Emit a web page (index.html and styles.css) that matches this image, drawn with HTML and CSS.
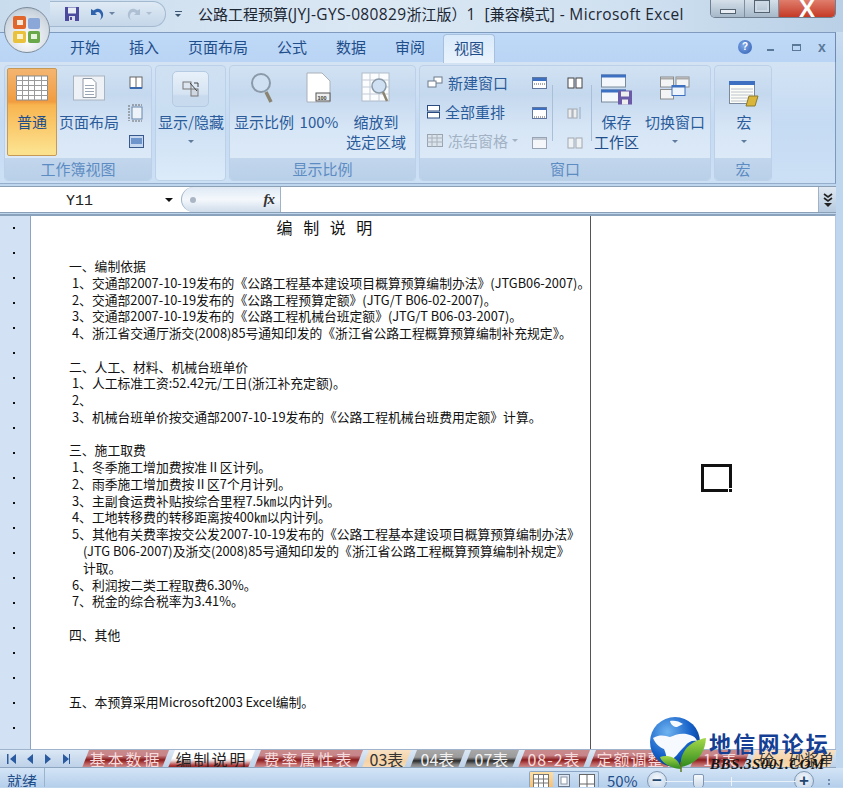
FILE: index.html
```html
<!DOCTYPE html>
<html lang="zh">
<head>
<meta charset="utf-8">
<title>Excel</title>
<link rel="stylesheet" href="styles.css">
</head>
<body>
<div class="window">
  <header class="titlebar">
    <div class="qat">
      <svg class="qat-save" width="16" height="16" viewBox="0 0 16 16"><rect x="1" y="1" width="14" height="14" fill="#4b4a9e"/><rect x="4" y="1.5" width="8" height="6" fill="#e8edf6"/><rect x="5" y="10" width="6" height="5" fill="#d8dce8"/><rect x="6" y="11" width="2" height="3" fill="#4b4a9e"/></svg>
      <svg class="qat-undo" width="16" height="14" viewBox="0 0 16 14"><path d="M2 2v6h6L6 6c3-2 5-1 6 2 .6 2 0 3-1 5 3-2 4-5 2.500-8C11.500 1 8 1 4.500 3.500z" fill="#2f62ad"/></svg>
      <span class="qat-arrow"></span>
      <svg class="qat-redo" width="16" height="14" viewBox="0 0 16 14"><path d="M14 2v6H8l2-2C7 4 5 5 4 8c-.6 2 0 3 1 5-3-2-4-5-2.500-8C4.500 1 8 1 11.500 3.500z" fill="#aebfd3"/></svg>
      <span class="qat-arrow dim"></span>
    </div>
    <span class="qat-more"></span>
    <div class="doc-title">公路工程预算<span class="lat">(JYJ-GYS-080829</span>浙江版）<span class="lat">1&nbsp; [</span>兼容模式<span class="lat">] - Microsoft Excel</span></div>
    <div class="winbtns">
      <div class="wb wb-min"><i></i></div>
      <div class="wb wb-max"><i></i></div>
      <div class="wb wb-close">X</div>
    </div>
  </header>

  <div class="office-btn">
    <svg width="30" height="30" viewBox="0 0 30 30"><rect x="1" y="1" width="13" height="13" rx="2" fill="#e0662b"/><rect x="16" y="3" width="12" height="11" rx="2" fill="#8aa7d8"/><rect x="1" y="16" width="13" height="12" rx="2" fill="#e9c13d"/><rect x="16" y="16" width="12" height="12" rx="2" fill="#6aa84a"/><rect x="5" y="5" width="6" height="5" fill="#f7e9d8"/><rect x="19" y="19" width="6" height="5" fill="#e8f3e0"/><rect x="5" y="19" width="6" height="5" fill="#fbf3d0"/></svg>
  </div>

  <nav class="tabs">
    <span class="tab">开始</span><span class="tab">插入</span><span class="tab">页面布局</span><span class="tab">公式</span><span class="tab">数据</span><span class="tab">审阅</span><span class="tab tab-on">视图</span>
    <div class="tab-tools">
      <span class="help">?</span><span class="tool-min"></span><span class="tool-max"></span><span class="tool-x">x</span>
    </div>
  </nav>

  <section class="ribbon">
    <div class="group g1">
      <div class="gbody">
        <div class="big active w50">
          <svg width="32" height="25" viewBox="0 0 32 25"><rect x=".5" y=".5" width="31" height="24" fill="#fff" stroke="#8a8a8a"/><path d="M0 5h32M0 10h32M0 15h32M0 20h32M6.500 0v25M12.500 0v25M18.500 0v25M25.500 0v25" stroke="#9a9a9a"/></svg>
          <span class="lbl">普通</span>
        </div>
        <div class="big w62">
          <svg width="32" height="25" viewBox="0 0 32 25"><rect x=".5" y=".5" width="31" height="24" fill="#eef2f6" stroke="#aab4c0"/><path d="M10 3h9l4 4v15H10z" fill="#fff" stroke="#8e98a4"/><path d="M12 10h9M12 13h9M12 16h9M12 19h9" stroke="#9aa6b4"/></svg>
          <span class="lbl">页面布局</span>
        </div>
        <div class="smallcol icons-only c1">
          <svg width="14" height="14" viewBox="0 0 14 14"><rect x="1" y="1" width="12" height="11" fill="#fff" stroke="#666"/><path d="M1 12h12" stroke="#3a6ab0" stroke-width="2"/><path d="M7 1v11" stroke="#666"/></svg>
          <svg width="16" height="18" viewBox="0 0 16 18"><rect x="4" y="3" width="10" height="12" fill="#eef3fa" stroke="#6a86a8"/><path d="M1 1v16M4 1h10M4 17h10" stroke="#666" stroke-dasharray="2 1"/></svg>
          <svg width="15" height="13" viewBox="0 0 15 13"><rect x=".5" y=".5" width="14" height="12" fill="#c5d8f0" stroke="#39598c"/><rect x="2" y="3" width="11" height="6" fill="#6d94cb"/></svg>
        </div>
      </div>
      <div class="glabel">工作簿视图</div>
    </div>

    <div class="group g2">
      <div class="gbody">
        <div class="big">
          <div class="roundbox">
            <svg width="18" height="18" viewBox="0 0 18 18"><rect x="1" y="2" width="8" height="7" fill="#dde6f0" stroke="#777"/><rect x="9" y="9" width="7" height="7" fill="#cfd8e2" stroke="#777"/><path d="M8 3l7 8M12 3h4v4" stroke="#444" fill="none"/></svg>
          </div>
          <span class="lbl lbl-tight">显示/隐藏</span>
          <span class="drop"></span>
        </div>
      </div>
    </div>

    <div class="group g3">
      <div class="gbody">
        <div class="big w60">
          <svg width="28" height="32" viewBox="0 0 28 32"><circle cx="11" cy="11" r="9" fill="#cfe0f2" stroke="#8a9aa8" stroke-width="2"/><path d="M16 20l5 10" stroke="#8a8470" stroke-width="3.500"/></svg>
          <span class="lbl">显示比例</span>
        </div>
        <div class="big w44">
          <svg width="28" height="32" viewBox="0 0 28 32"><path d="M2 1h15l8 8v21H2z" fill="#fff" stroke="#aab0b8"/><rect x="11" y="21" width="14" height="8" fill="#eee" stroke="#555"/><text x="12.500" y="28" class="svgtiny">100</text></svg>
          <span class="lbl">100%</span>
        </div>
        <div class="big w62 zoom-sel">
          <svg width="30" height="32" viewBox="0 0 30 32"><rect x="1" y="1" width="27" height="28" fill="#fafcfe" stroke="#b0bcc8"/><path d="M1 8h27M1 15h27M1 22h27M9 1v28M18 1v28" stroke="#c4ccd8"/><circle cx="18" cy="14" r="7" fill="#cfe0f2" stroke="#8a9aa8" stroke-width="1.500"/><path d="M22 20l4 9" stroke="#8a8470" stroke-width="2.500"/></svg>
          <span class="lbl">缩放到<br>选定区域</span>
        </div>
      </div>
      <div class="glabel">显示比例</div>
    </div>

    <div class="group g4">
      <div class="gbody">
        <div class="smallcol c2">
          <div class="sitem"><svg width="16" height="14" viewBox="0 0 16 14"><rect x="7" y="1" width="8" height="6" fill="#fff" stroke="#6c7a8c"/><rect x="1" y="5" width="8" height="6" fill="#fff" stroke="#6c7a8c"/></svg>新建窗口</div>
          <div class="sitem"><svg width="13" height="14" viewBox="0 0 13 14"><rect x=".5" y=".5" width="12" height="5.500" fill="#fff" stroke="#2b4a80"/><rect x=".5" y="7.500" width="12" height="5.500" fill="#fff" stroke="#2b4a80"/></svg>全部重排</div>
          <div class="sitem off"><svg width="16" height="14" viewBox="0 0 16 14"><rect x=".5" y=".5" width="15" height="12" fill="#dbe3ec" stroke="#9aa4ae"/><path d="M0 4h16M0 8h16M5 0v13M10 0v13" stroke="#a8b2bc"/></svg>冻结窗格<span class="mini"></span></div>
        </div>
        <div class="smallcol icons-only c3">
          <svg width="15" height="12" viewBox="0 0 15 12"><rect x=".5" y=".5" width="14" height="11" fill="#fff" stroke="#6078a0"/><rect x="1" y="1" width="13" height="3" fill="#3d70c0"/><path d="M2 7h11" stroke="#555" stroke-dasharray="1 1"/></svg>
          <svg width="15" height="12" viewBox="0 0 15 12"><rect x=".5" y=".5" width="14" height="11" fill="#fff" stroke="#6078a0"/><rect x="1" y="1" width="13" height="2" fill="#3d70c0"/><path d="M2 10h11" stroke="#555" stroke-dasharray="1 1"/></svg>
          <svg width="15" height="12" viewBox="0 0 15 12"><rect x=".5" y=".5" width="14" height="11" fill="#f4f6f9" stroke="#98a4b4"/><rect x="1" y="1" width="13" height="2" fill="#c0c8d4"/></svg>
        </div>
        <i class="vsep"></i>
        <div class="smallcol icons-only c4">
          <svg width="16" height="12" viewBox="0 0 16 12"><rect x="1" y="1" width="6" height="10" fill="#fff" stroke="#444"/><rect x="9" y="1" width="6" height="10" fill="#fff" stroke="#444"/></svg>
          <svg width="16" height="14" viewBox="0 0 16 14"><rect x="1" y="3" width="4" height="9" fill="#eee" stroke="#a0a8b0"/><rect x="6" y="3" width="4" height="9" fill="#eee" stroke="#a0a8b0"/><path d="M13 1v12" stroke="#9ab"/></svg>
          <svg width="16" height="12" viewBox="0 0 16 12"><rect x="1" y="1" width="6" height="10" fill="#eef2f5" stroke="#a0a8b0"/><rect x="9" y="1" width="6" height="10" fill="#eef2f5" stroke="#a0a8b0"/></svg>
        </div>
        <i class="vsep"></i>
        <div class="big w56 save-ws">
          <svg width="32" height="31" viewBox="0 0 32 31"><rect x=".5" y=".5" width="24" height="12" fill="#f4f7fb" stroke="#7a8a9c"/><rect x="0" y="0" width="25" height="3" fill="#3d70c0"/><rect x=".5" y="15.500" width="24" height="12" fill="#f4f7fb" stroke="#7a8a9c"/><rect x="0" y="15" width="25" height="3" fill="#3d70c0"/><rect x="17" y="16" width="14" height="14" fill="#6a5aa8"/><rect x="20" y="17" width="8" height="5" fill="#eee"/><rect x="21" y="25" width="6" height="5" fill="#eee"/></svg>
          <span class="lbl">保存<br><span class="nudge">工作区</span></span>
        </div>
        <div class="big w62">
          <svg width="30" height="23" viewBox="0 0 30 23"><rect x=".5" y=".5" width="13" height="10" fill="#f2f4f6" stroke="#8c8c8c"/><rect x="1" y="1" width="12" height="2" fill="#aaa"/><rect x="16" y=".5" width="13" height="10" fill="#f2f4f6" stroke="#8c8c8c"/><rect x="16" y="1" width="13" height="2" fill="#aaa"/><rect x=".5" y="13" width="13" height="9.500" fill="#f2f4f6" stroke="#8c8c8c"/><rect x="12" y="9" width="13" height="10" fill="#eef4fc" stroke="#3d70c0"/><rect x="12" y="9" width="13" height="2" fill="#3d70c0"/></svg>
          <span class="lbl">切换窗口</span>
          <span class="drop"></span>
        </div>
      </div>
      <div class="glabel">窗口</div>
    </div>

    <div class="group g5">
      <div class="gbody">
        <div class="big macro">
          <svg width="30" height="26" viewBox="0 0 30 26"><rect x=".5" y=".5" width="25" height="22" fill="#fdfdf8" stroke="#7a8a9c"/><rect x="0" y="0" width="26" height="4" fill="#3d70c0"/><path d="M2 8h22M2 11h22M2 14h22M2 17h22M2 20h18" stroke="#bcc4cc"/><path d="M20 15h9l-3 10h-9z" fill="#d9b63a" stroke="#8a7a30"/></svg>
          <span class="lbl">宏</span>
          <span class="drop"></span>
        </div>
      </div>
      <div class="glabel">宏</div>
    </div>
  </section>

  <div class="formula">
    <div class="namebox">Y11<span class="nb-arrow"></span></div>
    <div class="fxpill"><i class="fxdot"></i><em class="fx">fx</em></div>
    <div class="finput"></div>
    <div class="fexpand">
      <svg width="12" height="14" viewBox="0 0 12 14"><path d="M2 1l4 3 4-3M2 5l4 3 4-3" fill="none" stroke="#222" stroke-width="1.600"/><path d="M2 10h8l-4 4z" fill="#222"/></svg>
    </div>
  </div>

  <main class="sheet">
    <aside class="rowhead">
      <i></i><i></i><i></i><i></i><i></i><i></i><i></i><i></i><i></i><i></i><i></i><i></i><i></i><i></i><i></i><i></i><i></i><i></i><i></i><i></i><i></i>
    </aside>
    <article class="page">
      <h1 class="ptitle">编 制 说 明</h1>
      <div class="body">
        <p class="h">一、编制依据</p>
        <p>1、交通部2007-10-19发布的《公路工程基本建设项目概算预算编制办法》(JTGB06-2007)。</p>
        <p>2、交通部2007-10-19发布的《公路工程预算定额》(JTG/T B06-02-2007)。</p>
        <p>3、交通部2007-10-19发布的《公路工程机械台班定额》(JTG/T B06-03-2007)。</p>
        <p>4、浙江省交通厅浙交(2008)85号通知印发的《浙江省公路工程概算预算编制补充规定》。</p>
        <p class="blank"></p>
        <p class="h">二、人工、材料、机械台班单价</p>
        <p>1、人工标准工资:52.42元/工日(浙江补充定额)。</p>
        <p>2、</p>
        <p>3、机械台班单价按交通部2007-10-19发布的《公路工程机械台班费用定额》计算。</p>
        <p class="blank"></p>
        <p class="h">三、施工取费</p>
        <p>1、冬季施工增加费按准Ⅱ区计列。</p>
        <p>2、雨季施工增加费按Ⅱ区7个月计列。</p>
        <p>3、主副食运费补贴按综合里程7.5㎞以内计列。</p>
        <p>4、工地转移费的转移距离按400㎞以内计列。</p>
        <p>5、其他有关费率按交公发2007-10-19发布的《公路工程基本建设项目概算预算编制办法》</p>
        <p class="cont">(JTG B06-2007)及浙交(2008)85号通知印发的《浙江省公路工程概算预算编制补规定》</p>
        <p class="cont">计取。</p>
        <p>6、利润按二类工程取费6.30%。</p>
        <p>7、税金的综合税率为3.41%。</p>
        <p class="blank"></p>
        <p class="h">四、其他</p>
        <p class="blank"></p>
        <p class="blank"></p>
        <p class="blank"></p>
        <p class="h">五、本预算采用Microsoft2003 Excel编制。</p>
      </div>
    </article>
    <div class="canvas">
      <div class="cellcursor"><i></i></div>
    </div>
  </main>

  <div class="sheettabs">
    <div class="nav">
      <svg width="70" height="12" viewBox="0 0 70 12"><path d="M7 1v10h1.500V1zM16 1l-6 5 6 5zM33 1l-6 5 6 5zM45 1l6 5-6 5zM63 1l6 5-6 5zM69 1v10h1.500V1z" fill="#2a5a9f"/></svg>
    </div>
    <div class="st red w86">基本数据</div>
    <div class="st on w86">编制说明</div>
    <div class="st red w110">费率属性表</div>
    <div class="st peach w50">03表</div>
    <div class="st dark w55">04表</div>
    <div class="st dark w55">07表</div>
    <div class="st red w72">08-2表</div>
    <div class="st red w100">定额调整表</div>
    <div class="st red w60">11表</div>
    <div class="st peach w86 narrow">砼、砂浆单价</div>
  </div>

  <footer class="status">
    <span class="ready">就绪</span>
    <div class="viewbtns">
      <span class="vb vb-on"><svg width="16" height="14" viewBox="0 0 16 14"><rect x=".5" y=".5" width="15" height="13" fill="#fff" stroke="#777"/><path d="M0 5h16M0 9h16M5.500 0v14M10.500 0v14" stroke="#777"/></svg></span>
      <span class="vb"><svg width="12" height="13" viewBox="0 0 12 13"><rect x=".5" y=".5" width="11" height="12" fill="#dfe8f2" stroke="#6a7a8c"/><rect x="3" y="3" width="6" height="7" fill="#fff" stroke="#8a96a4"/></svg></span>
      <span class="vb"><svg width="16" height="14" viewBox="0 0 16 14"><rect x=".5" y=".5" width="15" height="13" fill="#fff" stroke="#666"/><path d="M8 0v14M0 10h16" stroke="#666"/></svg></span>
    </div>
    <span class="pct">50%</span>
    <div class="zoomer">
      <span class="zbtn">−</span>
      <div class="ztrack"><i class="zmid"></i><i class="zthumb"></i></div>
      <span class="zbtn">+</span>
    </div>
    <span class="grip"></span>
  </footer>

  <div class="logo">
    <svg class="logo-art" width="62" height="56" viewBox="0 0 62 56">
      <defs><radialGradient id="g" cx=".35" cy=".3" r=".8"><stop offset="0" stop-color="#6fb4f0"/><stop offset=".6" stop-color="#1560c8"/><stop offset="1" stop-color="#06307c"/></radialGradient><linearGradient id="l" x1="0" y1="0" x2="0" y2="1"><stop offset="0" stop-color="#a5d94a"/><stop offset="1" stop-color="#2f8a1e"/></linearGradient></defs>
      <circle cx="25" cy="26" r="25" fill="url(#g)"/>
      <path d="M3 22c8-4 12-2 17-1 5-2 12-5 20-2 4 1 6 3 7 6-5-1-9 1-12 5-3 3-6 6-8 9-3 3-5 5-9 6-2-4-2-8-4-12-5-2-9-6-11-11zM20 5c4-1 9 0 13 3l-6 3c-3 0-6-2-7-6z" fill="#f6fafe"/>
      <path d="M31 51C29 38 38 25 56 22 55 38 46 48 31 51z" fill="url(#l)"/>
      <path d="M31 53C24 53 12 48 10 41c9-3 19 1 21 12z" fill="url(#l)"/>
      <path d="M31 56V46" stroke="#5a7a20" stroke-width="1.500"/>
    </svg>
    <div class="logo-cn">地信网论坛</div>
    <div class="logo-en">BBS.3S001.COM</div>
  </div>
</div>
</body>
</html>
```
FILE: styles.css
```css
* { box-sizing: border-box; }
html, body { margin: 0; padding: 0; }
body { width: 843px; height: 788px; overflow: hidden; font-family: "Noto Sans CJK SC", "Noto Sans", sans-serif; background: #cfe0f3; }
.window { position: relative; width: 843px; height: 788px; display: flex; flex-direction: column; overflow: hidden; background: linear-gradient(#d6e5f4, #bfd6ef 60px); }

/* title bar */
.titlebar { height: 32px; flex: none; display: flex; align-items: center; padding-left: 50px; background: linear-gradient(90deg, #c9dcee, #dbe8f4 45%, #cfe0f0 75%, #b9d0e6); position: relative; }
.qat { width: 116px; height: 26px; margin-top: -5px; border: 1px solid #a3b9d0; border-left: 0; border-radius: 0 14px 14px 0; display: flex; align-items: center; padding-left: 14px; background: linear-gradient(#dfeaf5, #c4d6e9); }
.qat-save { margin-right: 9px; }
.qat-arrow { width: 0; height: 0; border: 3px solid transparent; border-top-color: #6b84a4; margin: 3px 11px 0 4px; }
.qat-arrow.dim { border-top-color: #b0c0d2; }
.qat-more { width: 7px; height: 6px; margin: -4px 0 0 9px; border-top: 1px solid #3d5673; position: relative; }
.qat-more::after { content: ""; position: absolute; left: 0; top: 2px; border: 3.500px solid transparent; border-top-color: #3d5673; }
.doc-title { margin: -4px 0 0 16px; font-size: 15px; color: #1c2733; white-space: nowrap; font-family: "Noto Sans CJK SC", "Noto Sans", sans-serif; flex: 1; }
.lat { font-family: "Open Sans", sans-serif; font-size: 15.500px; letter-spacing: .35px; white-space: pre; }
.winbtns { position: absolute; right: 7px; top: 0; width: 126px; height: 18px; display: flex; border: 1px solid #6f7f90; border-top: 0; border-radius: 0 0 5px 5px; overflow: hidden; }
.wb { display: flex; align-items: center; justify-content: center; }
.wb-min, .wb-max { width: 34px; background: linear-gradient(#d4dfe9, #a6b8c9); border-right: 1px solid #7e8e9e; }
.wb-min i { display: block; width: 16px; height: 5px; margin-top: 5px; border: 1px solid #55626f; background: #e8eef4; }
.wb-max i { display: block; width: 16px; height: 13px; border: 1px solid #55626f; margin-top: -5px; box-shadow: inset 0 0 0 2px #cdd9e4; }
.wb-close { flex: 1; color: #fff; font-size: 24px; font-weight: 700; line-height: 16px; font-family: "Liberation Sans", sans-serif; background: linear-gradient(#e07d6c, #c43a26); }

.office-btn { position: absolute; left: 4px; top: 7px; width: 46px; height: 46px; border-radius: 50%; background: radial-gradient(circle at 50% 70%, #fff, #c9d3dd 75%, #8c9aa8); border: 1px solid #7d8c9c; display: flex; align-items: center; justify-content: center; z-index: 2; }

/* tabs */
.tabs { height: 30px; flex: none; margin-right: 7px; display: flex; align-items: flex-end; padding-left: 70px; border-top: 1px solid #7f9cbe; border-right: 1px solid #6f8cae; background: linear-gradient(#bfdaf8, #b9d4f4); font-size: 15px; color: #1f4e8a; position: relative; }
.tab { height: 28px; line-height: 26px; margin-right: 29px; white-space: nowrap; }
.tab-on { margin: 0 0 -1px -11px; height: 29px; padding: 0 10px; width: 52px; background: linear-gradient(#d9eafb, #eaf3fc); border: 1px solid #a7c0dc; border-bottom: 0; border-radius: 4px 4px 0 0; }
.tab-tools { position: absolute; left: 738px; top: 4px; width: 95px; height: 20px; display: flex; align-items: center; }
.help { width: 14px; height: 14px; border-radius: 50%; background: radial-gradient(circle at 40% 40%, #7fa8e6, #2d5cb2); color: #fff; font: 700 10px/14px "Liberation Sans", sans-serif; text-align: center; }
.tool-min { width: 7px; height: 2px; background: #5a7898; margin: 6px 0 0 15px; }
.tool-max { width: 9px; height: 7px; border: 1px solid #5a7898; border-top-width: 2px; margin-left: 18px; }
.tool-x { margin-left: 17px; font: 700 14px/14px "Liberation Sans", sans-serif; color: #5a7898; }

/* ribbon */
.ribbon { height: 122px; flex: none; margin-right: 7px; padding: 3px 0 1px 4px; display: flex; gap: 3px; background: linear-gradient(#d3e3f4, #c5dbf3 50%, #cce0f5); border-right: 1px solid #7c99ba; border-bottom: 1px solid #94aecb; }
.group { display: flex; flex-direction: column; height: 116px; border: 1px solid #bcd1e8; border-radius: 4px; overflow: hidden; background: linear-gradient(#d2e2f3, #c4d8ee 25%, #d7e6f6 55%, #dfebf8); color: #2a5b9a; }
.g1 { width: 148px; }
.g2 { width: 71px; background: linear-gradient(#cfe0f2, #cadef2 40%, #dcebfa); }
.g3 { width: 187px; }
.g4 { width: 292px; }
.g5 { width: 58px; }
.gbody { height: 92px; display: flex; padding: 2px; flex: none; }
.glabel { flex: 1; text-align: center; font-size: 15px; line-height: 22px; color: #5d8cc2; background: linear-gradient(#c2d6ec, #b9d0e9); }
.big { display: flex; flex-direction: column; align-items: center; flex: none; padding-top: 4px; font-size: 15px; }
.big svg { flex: none; height: 32px; }
.lbl { line-height: 20px; text-align: center; white-space: nowrap; margin-top: 8px; }
.lbl-tight { margin-top: 5px; }
.drop { width: 0; height: 0; margin-top: 8px; border: 3px solid transparent; border-top-color: #5e7a9c; }
.w50 { width: 50px; }
.w62 { width: 62px; }
.w60 { width: 60px; margin-left: 2px; }
.w44 { width: 44px; margin-left: 3px; }
.w56 { width: 55px; }
.active { border: 1px solid #c69a55; border-radius: 2px; padding-top: 3px; background: linear-gradient(#f4b571, #f19c3f 38%, #f8b550 42%, #fce18d 95%); color: #1e4d8b; }
.zoom-sel { margin-left: 4px; }
.g1 .w62 { margin-left: 1px; }
.smallcol { display: flex; flex-direction: column; }
.icons-only { align-items: center; justify-content: space-between; height: 81px; padding-top: 9px; }
.c1 { margin-left: 6px; width: 20px; height: 80px; padding-top: 8px; }
.c2 { width: 106px; padding: 0 0 0 5px; font-size: 15px; }
.sitem { height: 29px; display: flex; align-items: center; gap: 5px; white-space: nowrap; }
.sitem svg { flex: none; }
.sitem.off { color: #a2b2c4; }
.mini { width: 0; height: 0; margin: 3px 0 0 -1px; border: 3px solid transparent; border-top-color: #a2b2c4; }
.c3 { width: 22px; margin-left: 0; }
.c4 { width: 24px; margin-left: 10px; }
.vsep { display: block; width: 1px; height: 56px; margin: 17px 0 0 4px; background: #a9bfd8; }
.c3 + .vsep { margin-left: 2px; height: 56px; }
.save-ws { margin-left: -3px; padding-top: 6px; }
.save-ws .lbl { margin-top: 6px; }
.nudge { color: #1f4e8a; }
.macro { width: 54px; padding-top: 10px; }
.macro .lbl { margin-top: 2px; }
.svgtiny { font: 700 5.500px "Liberation Sans", sans-serif; fill: #333; }
.roundbox { width: 37px; height: 36px; margin-top: -1px; border: 1px solid #b4cbe3; border-radius: 5px; background: linear-gradient(#e8f1fa, #d5e3f2 65%, #c8daee 70%); display: flex; align-items: center; justify-content: center; }
.roundbox svg { height: 18px; }

/* formula bar */
.formula { height: 27px; flex: none; margin: 2px 7px 0 0; display: flex; align-items: stretch; background: #fff; border-top: 1px solid #8ba0b4; border-bottom: 1px solid #8ba0b4; }
.namebox { width: 181px; padding: 2px 0 0 66px; font: 15px/26px "Liberation Mono", monospace; color: #222; position: relative; }
.nb-arrow { position: absolute; left: 165px; top: 11px; border: 4.500px solid transparent; border-top-color: #111; }
.fxpill { width: 100px; position: relative; border: 1px solid #9fb2c6; border-right: 1px solid #9fb2c6; border-top: 0; border-bottom: 0; border-radius: 13px 0 0 13px; background: linear-gradient(#dfe9f4, #f4f8fc 50%, #cfdceb); }
.fxdot { position: absolute; left: 8px; top: 10px; width: 6px; height: 6px; border-radius: 50%; background: #aab6c4; }
.fx { position: absolute; right: 6px; top: 1px; font: italic 700 15px/22px "Liberation Serif", serif; color: #333; letter-spacing: -1px; }
.finput { flex: 1; }
.fexpand { width: 18px; display: flex; align-items: center; justify-content: center; background: linear-gradient(#dfe8f2, #b8cbe0); border-left: 1px solid #9fb2c6; }

/* sheet */
.sheet { height: 535px; flex: none; margin: 1px 7px 0 0; display: flex; background: #fff; border-top: 2px solid #8aa2bc; border-right: 1px solid #b6c8dc; }
.rowhead { width: 31px; flex: none; padding-top: 11px; background: #d2e2f4; border-right: 1px solid #8ba4c2; display: flex; flex-direction: column; align-items: center; gap: 23px; padding-right: 22px; padding-left: 0; }
.rowhead i { display: block; width: 2px; height: 2px; background: #111; flex: none; margin-left: 19px; }
.page { width: 560px; flex: none; border-right: 1px solid #555; overflow: hidden; }
.ptitle { margin: 0; height: 42px; font-weight: 400; font-size: 16px; line-height: 22px; text-align: center; word-spacing: 7px; padding-left: 28px; color: #111; }
.body { padding-left: 41px; font-size: 12.800px; line-height: 16.770px; color: #111; }
.body p { margin: 0; height: 16.770px; white-space: nowrap; }
.body p.h { margin-left: -3px; }
.body p.cont { padding-left: 11px; }
.canvas { flex: 1; display: flex; align-items: flex-start; }
.cellcursor { width: 31px; height: 28px; border: 3px solid #111; margin: 248px 0 0 110px; position: relative; }
.cellcursor i { position: absolute; right: -4px; bottom: -4px; width: 5px; height: 5px; background: #111; border: 1px solid #fff; }

/* sheet tabs */
.sheettabs { height: 19px; flex: none; display: flex; align-items: stretch; margin-right: 7px; background: linear-gradient(#dbe7f4, #bdd1e8); border-top: 1px solid #9fb4cc; border-bottom: 1px solid #8fa6c0; overflow: hidden; }
.nav { width: 82px; flex: none; display: flex; align-items: center; }
.st { flex: none; height: 18px; line-height: 18px; text-align: center; font-size: 16px; letter-spacing: 2px; white-space: nowrap; clip-path: polygon(0 100%, 7px 0, 100% 0, calc(100% - 7px) 100%); margin-right: -1px; }
.red { color: #f6dcdc; background: linear-gradient(#c98a8a, #c8858a 30%, #8a1c1c 55%, #b95858 75%, #cf9a9a); }
.on { color: #222; background: linear-gradient(#fff 45%, #e9d9d9 60%, #b33a3a 85%, #7a1d1d); }
.peach { color: #333; background: linear-gradient(#f8e1c4, #f5d2a5 60%, #f9dcb8); }
.dark { color: #f2f2f2; background: linear-gradient(#a8a8a8, #9a9a9a 40%, #2a2a2a 60%, #7e7e7e 80%, #a4a4a4); }
.w86 { width: 87px; }
.w110 { width: 109px; }
.st.w50 { width: 49px; letter-spacing: 0; }
.w55 { width: 55px; letter-spacing: 0; }
.w72 { width: 72px; letter-spacing: 1px; }
.w100 { width: 100px; letter-spacing: 1px; }
.st.w60 { width: 60px; letter-spacing: 0; }
.narrow { font-size: 15px; letter-spacing: 0; text-align: left; padding-left: 10px; }

/* status */
.status { height: 19px; flex: none; display: flex; align-items: flex-start; position: relative; overflow: hidden; background: linear-gradient(#d3e4f6, #b5cfeb); color: #1f4e8a; font-size: 15px; padding-right: 7px; }
.ready { width: 45px; flex: none; padding: 3px 0 0 7px; line-height: 19px; border-right: 1px solid #9cb3cc; height: 19px; }
.viewbtns { margin: 3px 0 0 484px; height: 19px; width: 70px; display: flex; border: 1px solid #8ba6c4; border-bottom: 0; border-radius: 2px 2px 0 0; flex: none; }
.vb { flex: 1; display: flex; align-items: flex-start; justify-content: center; padding-top: 2px; }
.vb-on { background: linear-gradient(#fde0a6, #f7b96a); }
.pct { margin: 3px 0 0 8px; width: 42px; flex: none; line-height: 19px; }
.zoomer { display: flex; align-items: center; flex: none; margin: 3px 0 0 -2px; height: 20px; }
.zbtn { width: 20px; height: 20px; flex: none; border-radius: 50%; border: 1px solid #7f97b2; background: radial-gradient(circle at 50% 35%, #f4f8fc, #b9cde4); color: #24476f; font: 700 17px/18px "Liberation Sans", sans-serif; text-align: center; }
.ztrack { width: 131px; height: 1px; background: #e8f0f8; position: relative; margin: 0 -2px; }
.zmid { position: absolute; left: 66px; top: -4px; width: 1px; height: 9px; background: #eef4fa; }
.zthumb { position: absolute; left: 28px; top: -7px; width: 11px; height: 15px; background: linear-gradient(#f6f9fc, #c9d8e8); border: 1px solid #7f97b2; border-radius: 2px 2px 5px 5px; }
.grip { margin: 11px 0 0 14px; width: 5px; height: 10px; border-left: 2px dotted #6f8cae; }

/* forum watermark */
.logo { position: absolute; left: 650px; top: 716px; width: 186px; height: 56px; }
.logo-art { position: absolute; left: 0; top: 0; }
.logo-cn { position: absolute; left: 59px; top: 14px; font-size: 22px; line-height: 24px; letter-spacing: 2.200px; font-weight: 700; color: #143f94; white-space: nowrap; }
.logo-en { position: absolute; left: 60px; top: 40px; font: italic 700 15px/16px "Liberation Serif", serif; letter-spacing: .5px; color: #161616; white-space: nowrap; }
```
